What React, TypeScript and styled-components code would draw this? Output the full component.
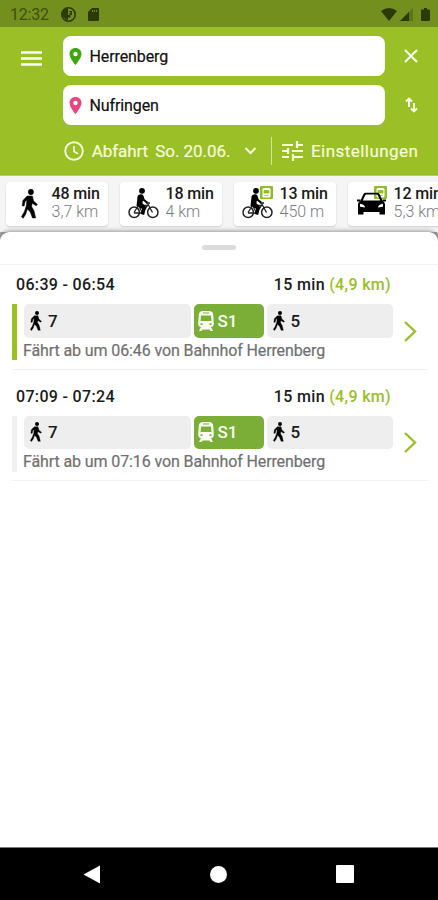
import React from "react";
import styled, { createGlobalStyle } from "styled-components";

const GlobalStyle = createGlobalStyle`
  * { box-sizing: border-box; }
  body { margin: 0; overflow: hidden; background: #fff; font-family: Roboto, "Liberation Sans", sans-serif; }
  svg { display: block; flex: none; overflow: visible; }
`;

const Screen = styled.div`
  width: 438px;
  height: 900px;
  display: flex;
  flex-direction: column;
  overflow: hidden;
`;

const StatusBar = styled.div`
  height: 27px;
  flex: none;
  display: flex;
  align-items: center;
  padding: 2px 7px 0 10px;
  background: #738f1e;
  color: #3f5010;
  font-size: 16px;
`;
const Clock = styled.span`
  width: 51px;
  letter-spacing: -0.2px;
`;
const StatusGroup = styled.div<{ $gap: number }>`
  display: flex;
  align-items: center;
  gap: ${(p) => p.$gap}px;
`;
const Spacer = styled.div`
  flex: 1;
`;

const Header = styled.header`
  height: 149px;
  flex: none;
  padding: 9px 20px 0 21px;
  background: #9bbf27;
  border-bottom: 1px solid #b3cf5c;
`;
const SearchRow = styled.div`
  display: flex;
  align-items: center;
  height: 40px;
  margin-bottom: 9px;
`;
const IconSlot = styled.div`
  width: 41.5px;
  padding-top: 4px;
`;
const Field = styled.div`
  width: 322.5px;
  height: 40px;
  display: flex;
  align-items: center;
  gap: 8px;
  padding-left: 6px;
  border-radius: 8px;
  background: #fff;
  color: #111;
  font-size: 16px;
  letter-spacing: -0.1px;
  -webkit-text-stroke: 0.2px;
`;
const ActionButton = styled.div`
  flex: 1;
  display: flex;
  justify-content: flex-end;
`;
const OptionRow = styled.div`
  display: flex;
  align-items: center;
  height: 34px;
  padding-left: 43px;
  color: #f6fbd8;
  font-size: 17px;
`;
const OptionText = styled.span<{ $width: number; $track?: number }>`
  width: ${(p) => p.$width}px;
  flex: none;
  white-space: nowrap;
  letter-spacing: ${(p) => p.$track ?? 0}px;
  -webkit-text-stroke: 0.2px;
`;
const OptionDivider = styled.div`
  width: 1.5px;
  height: 28px;
  margin: 0 10px 0 14px;
  background: #d4e49b;
`;

const ModeStrip = styled.div`
  height: 56px;
  flex: none;
  display: flex;
  gap: 12px;
  padding: 6px 0 0 6px;
  background: #f5f5f6;
`;
const ModeCard = styled.div`
  width: 102px;
  height: 44px;
  flex: none;
  display: flex;
  padding-left: 8px;
  border-radius: 4px;
  background: #fff;
  box-shadow: 0 1px 2px rgba(0, 0, 0, 0.16);
`;
const ModeIcon = styled.div`
  width: 37.5px;
  padding-top: 5px;
`;
const ModeText = styled.div`
  display: flex;
  flex-direction: column;
  padding-top: 3px;
  white-space: nowrap;
  font-size: 16px;
  line-height: 18px;
`;
const Minutes = styled.span`
  color: #1a1a1a;
  font-weight: 500;
  letter-spacing: -0.15px;
`;
const Distance = styled.span`
  color: #7c7c7c;
  font-weight: 300;
`;

const SheetBackdrop = styled.div`
  flex: 1;
  display: flex;
  background: #aaa;
`;
const Sheet = styled.main`
  flex: 1;
  border-radius: 9px 9px 0 0;
  background: #fff;
  box-shadow: 0 -1px 4px rgba(0, 0, 0, 0.4);
`;
const Grabber = styled.div`
  height: 33px;
  display: flex;
  justify-content: center;
  padding-top: 13px;
  border-bottom: 1px solid #f3f3f3;
  &::before {
    content: "";
    width: 34px;
    height: 5px;
    border-radius: 3px;
    background: #dcdcdc;
  }
`;
const Journey = styled.article`
  height: 104.5px;
  margin: 0 10px 7px 12px;
  padding-top: 10px;
  border-bottom: 1px solid #f1f1f1;
`;
const JourneyHead = styled.div`
  display: flex;
  justify-content: space-between;
  height: 29px;
  padding: 0 37px 0 4px;
  color: #1a1a1a;
  font-size: 16px;
  font-weight: 500;
  line-height: 20px;
  letter-spacing: 0.33px;
`;
const Km = styled.span`
  color: #9bbf27;
`;
const JourneyBody = styled.div<{ $active: boolean }>`
  height: 56px;
  display: flex;
  align-items: center;
  justify-content: space-between;
  border-left: 5.5px solid ${(p) => (p.$active ? "#9bc11c" : "#f0f0f0")};
  padding: 0 11px 0 7px;
`;
const Legs = styled.div`
  width: 368.5px;
  height: 56px;
`;
const LegRow = styled.div`
  display: flex;
  gap: 2.5px;
`;
const Leg = styled.div<{ $width: number; $train?: boolean }>`
  width: ${(p) => p.$width}px;
  height: 33.5px;
  display: flex;
  align-items: center;
  gap: ${(p) => (p.$train ? 4 : 6)}px;
  padding-left: ${(p) => (p.$train ? 4 : 6)}px;
  border-radius: 5px;
  background: ${(p) => (p.$train ? "#7bae36" : "#eeeeee")};
  color: ${(p) => (p.$train ? "#f8fff0" : "#1a1a1a")};
  font-size: 17px;
  font-weight: 500;
`;
const Note = styled.div`
  margin: 3px 0 0 -1px;
  color: #707070;
  font-size: 16px;
  line-height: 20px;
  letter-spacing: -0.11px;
  white-space: nowrap;
  -webkit-text-stroke: 0.2px;
`;

const NavBar = styled.nav`
  height: 53px;
  flex: none;
  display: flex;
  align-items: center;
  justify-content: space-between;
  padding: 0 84px 0 83px;
  background: #000;
  border-top: 1px solid #777;
`;

const Walker = ({ w, h }: { w: number; h: number }) => (
  <svg width={w} height={h} viewBox="0 0 18 30" preserveAspectRatio="none">
    <circle cx="10.500" cy="3" r="3" />
    <path
      d="M6.500 7h5.500l1.500 5.200 3.800 3-1.200 1.600-4.300-2.600-.5 3.600 2.400 3.700L15.500 29h-3.300l-2.400-6-3-3L5 25.200 2.300 29.300.4 27.700l3-4.700L5.600 17l.6-6L4.300 12.800l-1 4.200H1.300L2 11.500z"
      stroke="#000"
      strokeWidth=".5"
      strokeLinejoin="round"
    />
  </svg>
);

const TransitBadge = () => (
  <g transform="translate(0 -1)">
    <rect x="18" y="0" width="13" height="13" rx=".8" fill="#91bd29" />
    <rect x="20.500" y="2" width="8" height="9.500" rx="1.500" fill="#fff" />
    <path d="M22 4.500h5v2.500h-5zM22.500 9.500h4" fill="#91bd29" stroke="#91bd29" strokeWidth=".8" />
  </g>
);

const Bicycle = ({ badge }: { badge?: boolean }) => (
  <svg width="31" height="32" viewBox="0 0 31 32">
    {badge && <TransitBadge />}
    <circle cx="14" cy="3.800" r="2.900" />
    <g fill="none" stroke="#222">
      <circle cx="6.200" cy="25.300" r="5.200" strokeWidth="1.500" />
      <circle cx="24.800" cy="25.300" r="5.200" strokeWidth="1.500" />
      <path d="M6 25.500l4.500-7h9l-5 7.500H6M10.500 18.500l4 7.500M18.500 14.500l6 11M18 16h4" strokeWidth="1.300" />
      <path d="M10.500 17.500l5.500 3.700-1.500 6.300" stroke="#000" strokeWidth="3.400" strokeLinejoin="round" />
      <path d="M14 11.500l5 4" stroke="#000" strokeWidth="2.200" />
    </g>
    <path d="M9.500 9.500c1-2.500 4.500-3 6-.8l1 3.300-1.800 2-.2 2.500 3.700 3.500-1 2-8.700-3z" />
  </svg>
);

const Car = () => (
  <svg width="31" height="32" viewBox="0 0 31 32">
    <TransitBadge />
    <path
      transform="translate(0 -1.500)"
      fillRule="evenodd"
      d="M4.300 15.500 7 9.400c.6-1.500 1.500-2.100 3-2.100h11c1.500 0 2.400.6 3 2.100l2.700 6.100c1.800 1 2.300 2.200 2.300 4V29h-5.500v-2.600h-16V29H2v-9.500c0-1.800.5-3 2.300-4zM6.800 15h17.400l-2.400-5.300c-.2-.5-.6-.8-1.200-.8H10.400c-.6 0-1 .3-1.200.8zM4 18.300v2.900l5 .9c0-2-2-3.500-5-3.800zm23 0c-3 .3-5 1.800-5 3.800l5-.9z"
    />
    <path d="M1 13.500h3.500M26.500 13.500h3.500" stroke="#000" strokeWidth="2" />
  </svg>
);

const Train = () => (
  <svg width="16" height="20" viewBox="0 0 16 20">
    <path
      fill="#fafff2"
      fillRule="evenodd"
      d="M5 0h6c2.500 0 4 1.300 4.200 3.500l.6 9c.1 2.200-1 3.500-2.800 3.500l2 4h-2.500l-1-1.500h-7L3.500 20H1l2-4C1.200 16 .1 14.700.2 12.500l.6-9C1 1.300 2.500 0 5 0zM4.800 1.600v1h6.400v-1zM3 4.500l-.5 5.500h11L13 4.500zM2.500 12.300v1.700h2v-1.700zM11.500 12.300v1.700h2v-1.700z"
    />
  </svg>
);

const Pin = ({ color }: { color: string }) => (
  <svg width="13" height="17" viewBox="0 0 13 17">
    <path
      fill={color}
      fillRule="evenodd"
      d="M6.500 0C2.900 0 .5 2.600.5 6c0 4.300 6 11 6 11s6-6.700 6-11c0-3.400-2.400-6-6-6zm0 3.800a2.200 2.200 0 1 1 0 4.400 2.200 2.200 0 0 1 0-4.400z"
    />
  </svg>
);

const WalkInset = styled.div`
  padding: 2px 0 0 7px;
`;

const modes = [
  { icon: <WalkInset><Walker w={17} h={30} /></WalkInset>, min: "48 min", km: "3,7 km" },
  { icon: <Bicycle />, min: "18 min", km: "4 km" },
  { icon: <Bicycle badge />, min: "13 min", km: "450 m" },
  { icon: <Car />, min: "12 min", km: "5,3 km" },
];

const journeys = [
  { time: "06:39 - 06:54", depart: "06:46", active: true },
  { time: "07:09 - 07:24", depart: "07:16", active: false },
];

export default function App() {
  return (
    <Screen>
      <GlobalStyle />
      <StatusBar>
        <Clock>12:32</Clock>
        <StatusGroup $gap={12}>
          <svg width="15" height="15" viewBox="0 0 15 15">
            <circle cx="7.500" cy="7.500" r="6.700" fill="#738f1e" stroke="#2c3a08" strokeWidth="1.600" />
            <path d="M2 2.500L7 1v12l-2-.5L1 9z" fill="#2c3a08" />
            <path d="M7 4h4v1.800H8.500V8H11V6M7 8h2.500v2.500H7z" fill="#2c3a08" />
          </svg>
          <svg width="11" height="13" viewBox="0 0 11 13">
            <path fillRule="evenodd" d="M4 0h6q1 0 1 1v11q0 1-1 1H1q-1 0-1-1V4zM4 2v2h1V2zm2 0v2h1V2zm2 0v2h1V2z" fill="#2c3a08" />
          </svg>
        </StatusGroup>
        <Spacer />
        <StatusGroup $gap={3}>
          <svg width="16" height="13" viewBox="0 0 16 13">
            <path d="M0 3Q8-3 16 3L8 13z" fill="#2c3a08" />
          </svg>
          <svg width="13" height="13" viewBox="0 0 13 13">
            <path d="M13 0v13H0z" fill="#5c7519" />
            <path d="M9 4v9H0z" fill="#2c3a08" />
          </svg>
          <svg width="15" height="13" viewBox="0 0 15 13">
            <path d="M8 0h3v1.500h2q1 0 1 1V12q0 1-1 1H6q-1 0-1-1V2.500q0-1 1-1h2z" fill="#2c3a08" />
          </svg>
        </StatusGroup>
      </StatusBar>

      <Header>
        <SearchRow>
          <IconSlot>
            <svg width="21" height="15" viewBox="0 0 21 15">
              <path d="M0 1.500h21M0 7.500h21M0 13.500h21" stroke="#fbfff0" strokeWidth="2.500" />
            </svg>
          </IconSlot>
          <Field>
            <Pin color="#41a510" />
            Herrenberg
          </Field>
          <ActionButton>
            <svg width="14" height="14" viewBox="0 0 14 14">
              <path d="M1 1l12 12M13 1L1 13" stroke="#fbfff0" strokeWidth="2" />
            </svg>
          </ActionButton>
        </SearchRow>
        <SearchRow>
          <IconSlot />
          <Field>
            <Pin color="#ea4583" />
            Nufringen
          </Field>
          <ActionButton>
            <svg width="13" height="16" viewBox="0 0 13 16">
              <path d="M4 10V2M1 4.500L4 1.500l3 3M9 6v8M6 11.500l3 3 3-3" fill="none" stroke="#fbfff0" strokeWidth="1.900" />
            </svg>
          </ActionButton>
        </SearchRow>
        <OptionRow>
          <svg width="20" height="20" viewBox="0 0 20 20">
            <circle cx="10" cy="10" r="8.800" fill="none" stroke="#f6fbd8" strokeWidth="1.900" />
            <path d="M10 5v5.500l4 2.300" fill="none" stroke="#f6fbd8" strokeWidth="1.600" />
          </svg>
          <Spacer />
          <OptionText $width={63.5} $track={-0.1}>Abfahrt</OptionText>
          <OptionText $width={88.5} $track={-0.05}>So. 20.06.</OptionText>
          <svg width="13" height="8" viewBox="0 0 13 8">
            <path d="M1.500 1l5 5 5-5" fill="none" stroke="#f6fbd8" strokeWidth="2" />
          </svg>
          <OptionDivider />
          <svg width="21" height="20" viewBox="0 0 21 20">
            <path
              d="M0 4h11M15 4h6M15 0v7M0 10h6M10 10h11M6 7v6M0 16h7M11 16h10M11 13v7"
              fill="none"
              stroke="#f6fbd8"
              strokeWidth="2.200"
            />
          </svg>
          <Spacer />
          <OptionText $width={107} $track={0.45}>Einstellungen</OptionText>
        </OptionRow>
      </Header>

      <ModeStrip>
        {modes.map((m) => (
          <ModeCard key={m.min}>
            <ModeIcon>{m.icon}</ModeIcon>
            <ModeText>
              <Minutes>{m.min}</Minutes>
              <Distance>{m.km}</Distance>
            </ModeText>
          </ModeCard>
        ))}
      </ModeStrip>

      <SheetBackdrop>
        <Sheet>
          <Grabber />
          {journeys.map((j) => (
            <Journey key={j.time}>
              <JourneyHead>
                <span>{j.time}</span>
                <span>
                  15 min <Km>(4,9 km)</Km>
                </span>
              </JourneyHead>
              <JourneyBody $active={j.active}>
                <Legs>
                  <LegRow>
                    <Leg $width={167}>
                      <Walker w={12} h={20} />7
                    </Leg>
                    <Leg $width={70.5} $train>
                      <Train />
                      S1
                    </Leg>
                    <Leg $width={126}>
                      <Walker w={12} h={20} />5
                    </Leg>
                  </LegRow>
                  <Note>Fährt ab um {j.depart} von Bahnhof Herrenberg</Note>
                </Legs>
                <svg width="13" height="21" viewBox="0 0 13 21">
                  <path d="M1 0l10 9.500L1 19" fill="none" stroke="#9bbf27" strokeWidth="2.400" />
                </svg>
              </JourneyBody>
            </Journey>
          ))}
        </Sheet>
      </SheetBackdrop>

      <NavBar>
        <svg width="18" height="19" viewBox="0 0 18 19">
          <path d="M17 .5v18L.5 9.500z" fill="#fff" />
        </svg>
        <svg width="17" height="17" viewBox="0 0 17 17">
          <circle cx="8.500" cy="8.500" r="8.500" fill="#fff" />
        </svg>
        <svg width="18" height="18" viewBox="0 0 18 18">
          <rect width="18" height="18" rx="1" fill="#fff" />
        </svg>
      </NavBar>
    </Screen>
  );
}
